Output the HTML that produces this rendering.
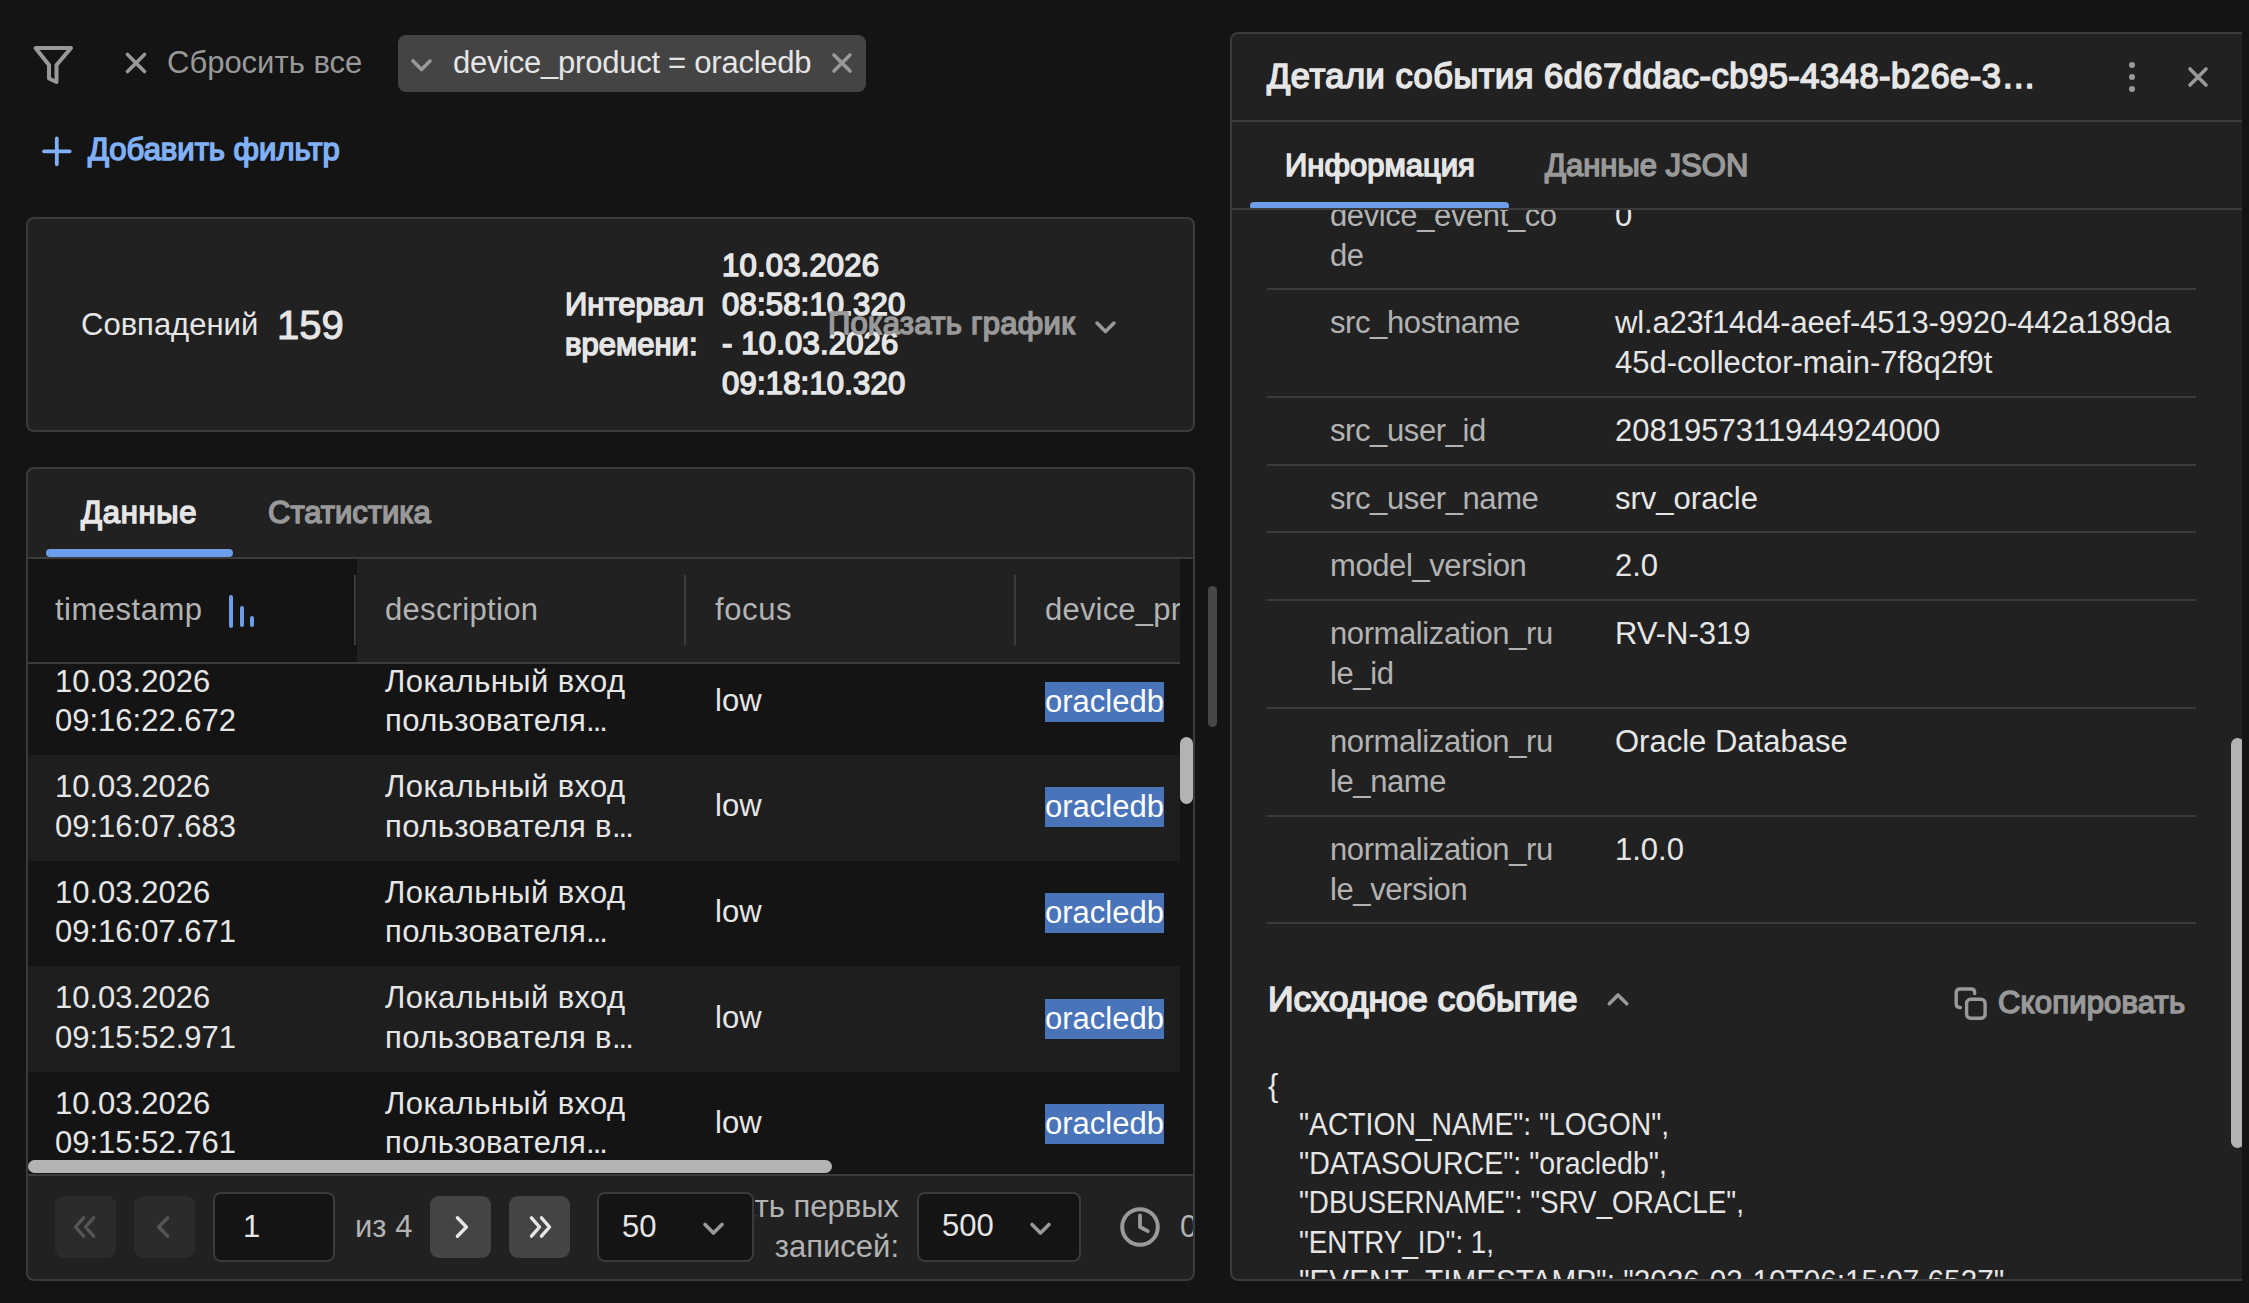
<!DOCTYPE html>
<html><head><meta charset="utf-8">
<style>
*{box-sizing:border-box;margin:0;padding:0}
html,body{width:2249px;height:1303px;overflow:hidden;background:#141414}
body{position:relative;font-family:"Liberation Sans",sans-serif;font-size:31px;color:#e6e6e6}
.a{position:absolute}
.t{position:absolute;white-space:nowrap;line-height:40px}
.b{font-weight:400;font-size:31px;-webkit-text-stroke:1.5px currentColor}
.g{color:#999}
.s{color:#b3b3b3}
.card{position:absolute;background:#212121;border:2px solid #3b3b3b;border-radius:8px}
svg{position:absolute;overflow:visible}
</style></head><body>

<!-- top filter bar -->
<svg style="left:0;top:0" width="1" height="1">
  <path d="M35.5 48 L71 48 L56.5 65 L56.5 82 L49 78.5 L49 65 Z" fill="none" stroke="#999" stroke-width="4" stroke-linejoin="round"/>
  <path d="M127.5 54.5 L144.5 71.5 M144.5 54.5 L127.5 71.5" stroke="#999" stroke-width="3.6" stroke-linecap="round"/>
</svg>
<div class="t g" style="left:167px;top:43.3px">Сбросить все</div>
<div class="a" style="left:398px;top:35px;width:468px;height:57px;background:#444;border-radius:8px"></div>
<svg style="left:0;top:0" width="1" height="1">
  <path d="M413 61 L421.5 69.5 L430 61" fill="none" stroke="#999" stroke-width="3.6" stroke-linecap="round" stroke-linejoin="round"/>
  <path d="M834 55 L850 71 M850 55 L834 71" stroke="#999" stroke-width="3.6" stroke-linecap="round"/>
</svg>
<div class="t" style="left:453px;top:43.3px;letter-spacing:-0.25px">device_product = oracledb</div>

<svg style="left:0;top:0" width="1" height="1">
  <path d="M44 151.3 L69.7 151.3 M56.8 138.5 L56.8 164.3" stroke="#80b0f7" stroke-width="3.8" stroke-linecap="round"/>
</svg>
<div class="t b" style="left:88px;top:130.3px;color:#80b0f7">Добавить фильтр</div>

<!-- card 1 -->
<div class="card" style="left:26px;top:217px;width:1169px;height:215px"></div>
<div class="t" style="left:81px;top:305.3px">Совпадений</div>
<div class="t b" style="left:277px;top:304.5px;font-size:40px;-webkit-text-stroke:1.0px currentColor">159</div>
<div class="t b" style="left:565px;top:285.2px;line-height:39.4px">Интервал<br>времени:</div>
<div class="t b" style="left:722px;top:245.6px;line-height:39.4px;letter-spacing:0.2px">10.03.2026<br>08:58:10.320<br>- 10.03.2026<br>09:18:10.320</div>
<div class="t b g" style="left:828px;top:303.7px;letter-spacing:0.3px">Показать график</div>
<svg style="left:0;top:0" width="1" height="1">
  <path d="M1097 323.1 L1105.5 331.6 L1114 323.1" fill="none" stroke="#999" stroke-width="3.6" stroke-linecap="round" stroke-linejoin="round"/>
</svg>

<!-- card 2 -->
<div class="card" style="left:26px;top:467px;width:1169px;height:814px"></div>
<div class="t b" style="left:81px;top:493.1px;letter-spacing:0.7px">Данные</div>
<div class="t b g" style="left:268px;top:493.4px">Статистика</div>
<div class="a" style="left:46px;top:549px;width:187px;height:8px;background:#6c9de9;border-radius:4px"></div>
<div class="a" style="left:28px;top:557px;width:1165px;height:2px;background:#3b3b3b"></div>

<!-- table -->
<div class="a" style="left:28px;top:559px;width:1165px;height:615px;background:#141414;overflow:hidden">
  <!-- header -->
  <div class="a" style="left:329px;top:0;width:823px;height:103px;background:#212121"></div>
  <div class="a" style="left:0;top:103px;width:1152px;height:2px;background:#3b3b3b"></div>
  <div class="a" style="left:326px;top:16px;width:2px;height:70px;background:#3b3b3b"></div>
  <div class="a" style="left:656px;top:16px;width:2px;height:70px;background:#3b3b3b"></div>
  <div class="a" style="left:986px;top:16px;width:2px;height:70px;background:#3b3b3b"></div>
  <div class="t s" style="left:27px;top:31.3px;letter-spacing:0.5px">timestamp</div>
  <div class="a" style="left:201px;top:35.5px;width:4px;height:33px;background:#6c9de9;border-radius:2px"></div>
  <div class="a" style="left:212px;top:46.6px;width:4px;height:21.4px;background:#6c9de9;border-radius:2px"></div>
  <div class="a" style="left:222.2px;top:57.4px;width:4px;height:10.6px;background:#6c9de9;border-radius:2px"></div>
  <div class="t s" style="left:357px;top:31.3px;letter-spacing:0.3px">description</div>
  <div class="t s" style="left:687px;top:31.3px;letter-spacing:0.6px">focus</div>
  <div class="a" style="left:1017px;top:0;width:135px;height:103px;overflow:hidden"><div class="t s" style="left:0;top:31.3px;letter-spacing:0.2px">device_product</div></div>
  <!-- body -->
  <div class="a" style="left:0;top:105px;width:1152px;height:510px;overflow:hidden">
    <div class="a" style="left:0;top:-14.6px;width:1152px">
      <div class="a" style="left:0;top:0.0px;width:1152px;height:105.6px;background:#141414">
        <div class="t" style="left:27px;top:12.2px;line-height:39.4px">10.03.2026<br>09:16:22.672</div>
        <div class="t" style="left:357px;top:12.2px;line-height:39.4px;letter-spacing:0.4px">Локальный вход<br>пользователя<span style="letter-spacing:-2px">...</span></div>
        <div class="t" style="left:687px;top:31.3px">low</div>
        <div class="t" style="left:1017px;top:32.4px;background:#4a74b9;color:#fff;padding-right:0">oracledb</div>
      </div>
      <div class="a" style="left:0;top:105.6px;width:1152px;height:105.6px;background:#1e1e1e">
        <div class="t" style="left:27px;top:12.2px;line-height:39.4px">10.03.2026<br>09:16:07.683</div>
        <div class="t" style="left:357px;top:12.2px;line-height:39.4px;letter-spacing:0.4px">Локальный вход<br>пользователя в<span style="letter-spacing:-2px">...</span></div>
        <div class="t" style="left:687px;top:31.3px">low</div>
        <div class="t" style="left:1017px;top:32.4px;background:#4a74b9;color:#fff;padding-right:0">oracledb</div>
      </div>
      <div class="a" style="left:0;top:211.2px;width:1152px;height:105.6px;background:#141414">
        <div class="t" style="left:27px;top:12.2px;line-height:39.4px">10.03.2026<br>09:16:07.671</div>
        <div class="t" style="left:357px;top:12.2px;line-height:39.4px;letter-spacing:0.4px">Локальный вход<br>пользователя<span style="letter-spacing:-2px">...</span></div>
        <div class="t" style="left:687px;top:31.3px">low</div>
        <div class="t" style="left:1017px;top:32.4px;background:#4a74b9;color:#fff;padding-right:0">oracledb</div>
      </div>
      <div class="a" style="left:0;top:316.8px;width:1152px;height:105.6px;background:#1e1e1e">
        <div class="t" style="left:27px;top:12.2px;line-height:39.4px">10.03.2026<br>09:15:52.971</div>
        <div class="t" style="left:357px;top:12.2px;line-height:39.4px;letter-spacing:0.4px">Локальный вход<br>пользователя в<span style="letter-spacing:-2px">...</span></div>
        <div class="t" style="left:687px;top:31.3px">low</div>
        <div class="t" style="left:1017px;top:32.4px;background:#4a74b9;color:#fff;padding-right:0">oracledb</div>
      </div>
      <div class="a" style="left:0;top:422.4px;width:1152px;height:105.6px;background:#141414">
        <div class="t" style="left:27px;top:12.2px;line-height:39.4px">10.03.2026<br>09:15:52.761</div>
        <div class="t" style="left:357px;top:12.2px;line-height:39.4px;letter-spacing:0.4px">Локальный вход<br>пользователя<span style="letter-spacing:-2px">...</span></div>
        <div class="t" style="left:687px;top:31.3px">low</div>
        <div class="t" style="left:1017px;top:32.4px;background:#4a74b9;color:#fff;padding-right:0">oracledb</div>
      </div>
    </div>
  </div>
  <!-- scrollbars -->
  <div class="a" style="left:1152px;top:178px;width:13px;height:67px;background:#b3b3b3;border-radius:6.5px"></div>
  <div class="a" style="left:0;top:601px;width:804px;height:13px;background:#b3b3b3;border-radius:6.5px"></div>
</div>

<!-- footer -->
<div class="a" style="left:28px;top:1174px;width:1165px;height:2px;background:#3b3b3b"></div>
<div class="a" style="left:55px;top:1196px;width:61px;height:62px;background:#2b2b2b;border-radius:9px"></div>
<div class="a" style="left:134px;top:1196px;width:61px;height:62px;background:#2b2b2b;border-radius:9px"></div>
<div class="a" style="left:213px;top:1192px;width:122px;height:70px;background:#141414;border:2px solid #3b3b3b;border-radius:8px"></div>
<div class="a" style="left:430px;top:1196px;width:61px;height:62px;background:#444;border-radius:9px"></div>
<div class="a" style="left:509px;top:1196px;width:61px;height:62px;background:#444;border-radius:9px"></div>
<svg style="left:0;top:0" width="1" height="1">
  <path d="M83.6 1217.8 L75.5 1227 L83.6 1236.2 M93.6 1217.8 L85.5 1227 L93.6 1236.2" fill="none" stroke="#555" stroke-width="3.4" stroke-linecap="round" stroke-linejoin="round"/>
  <path d="M167.7 1217.8 L158.7 1227 L167.7 1236.2" fill="none" stroke="#555" stroke-width="3.4" stroke-linecap="round" stroke-linejoin="round"/>
  <path d="M457.4 1217.8 L466.4 1227 L457.4 1236.2" fill="none" stroke="#e6e6e6" stroke-width="3.4" stroke-linecap="round" stroke-linejoin="round"/>
  <path d="M531.5 1217.8 L539.5 1227 L531.5 1236.2 M541.5 1217.8 L549.5 1227 L541.5 1236.2" fill="none" stroke="#e6e6e6" stroke-width="3.4" stroke-linecap="round" stroke-linejoin="round"/>
</svg>
<div class="t" style="left:243px;top:1207px">1</div>
<div class="t s" style="left:355px;top:1207px">из 4</div>
<div class="a" style="left:755px;top:1176px;width:145px;height:103px;overflow:hidden">
  <div class="t s" style="right:1px;top:11.2px;text-align:right">Показать первых<br>записей:</div>
</div>
<div class="a" style="left:597px;top:1192px;width:157px;height:70px;background:#141414;border:2px solid #3b3b3b;border-radius:8px"></div>
<div class="a" style="left:917px;top:1192px;width:164px;height:70px;background:#141414;border:2px solid #3b3b3b;border-radius:8px"></div>
<div class="t" style="left:622px;top:1206.7px">50</div>
<div class="t" style="left:942px;top:1205.5px">500</div>
<svg style="left:0;top:0" width="1" height="1">
  <path d="M705 1224.5 L713.5 1233 L722 1224.5" fill="none" stroke="#999" stroke-width="3.6" stroke-linecap="round" stroke-linejoin="round"/>
  <path d="M1032 1224.5 L1040.5 1233 L1049 1224.5" fill="none" stroke="#999" stroke-width="3.6" stroke-linecap="round" stroke-linejoin="round"/>
  <circle cx="1140" cy="1227" r="17.8" fill="none" stroke="#999" stroke-width="4"/>
  <path d="M1140 1215.5 L1140 1227 L1147.8 1231.2" fill="none" stroke="#999" stroke-width="3.8" stroke-linecap="round" stroke-linejoin="round"/>
</svg>
<div class="a" style="left:1170px;top:1176px;width:23px;height:103px;overflow:hidden">
  <div class="t s" style="left:10px;top:30.5px">0</div>
</div>

<!-- page scrollbar -->
<div class="a" style="left:1208px;top:586px;width:9px;height:141px;background:#474747;border-radius:4.5px"></div>

<!-- right panel -->
<div class="a" style="left:1230px;top:32px;width:1012px;height:1249px;overflow:hidden">
  <div class="a" style="left:0;top:0;width:1100px;height:1249px;background:#212121;border:2px solid #3b3b3b;border-radius:8px"></div>
  <div class="t b" style="left:37px;top:24.3px;font-size:34.4px;letter-spacing:0.55px;-webkit-text-stroke:1.6px currentColor">Детали события 6d67ddac-cb95-4348-b26e-3…</div>
  <div class="a" style="left:898.8px;top:29.8px;width:6.4px;height:6.4px;border-radius:50%;background:#999"></div>
  <div class="a" style="left:898.8px;top:41.8px;width:6.4px;height:6.4px;border-radius:50%;background:#999"></div>
  <div class="a" style="left:898.8px;top:53.8px;width:6.4px;height:6.4px;border-radius:50%;background:#999"></div>
  <svg style="left:0;top:0" width="1" height="1">
    <path d="M960 37 L976 53 M976 37 L960 53" stroke="#999" stroke-width="3.6" stroke-linecap="round"/>
  </svg>
  <div class="a" style="left:2px;top:88px;width:1010px;height:2px;background:#3b3b3b"></div>
  <div class="t b" style="left:55px;top:114.2px">Информация</div>
  <div class="t b g" style="left:315px;top:114.2px">Данные JSON</div>
  <!-- content -->
  <div class="a" style="left:2px;top:178px;width:1010px;height:1069px;overflow:hidden">
    <div class="t s" style="left:98px;top:-13.7px;line-height:39.4px;letter-spacing:-0.4px">device_event_co<br>de</div>
    <div class="t" style="left:383px;top:-13.7px;line-height:39.4px">0</div>
    <div class="a" style="left:35px;top:78px;width:929px;height:2px;background:#3b3b3b"></div>
    <div class="t s" style="left:98px;top:93.2px;line-height:39.4px;letter-spacing:-0.4px">src_hostname</div>
    <div class="t" style="left:383px;top:93.2px;line-height:39.4px"><span style="letter-spacing:-0.17px">wl.a23f14d4-aeef-4513-9920-442a189da</span><br>45d-collector-main-7f8q2f9t</div>
    <div class="a" style="left:35px;top:186px;width:929px;height:2px;background:#3b3b3b"></div>
    <div class="t s" style="left:98px;top:201.2px;line-height:39.4px;letter-spacing:-0.4px">src_user_id</div>
    <div class="t" style="left:383px;top:201.2px;line-height:39.4px">2081957311944924000</div>
    <div class="a" style="left:35px;top:254px;width:929px;height:2px;background:#3b3b3b"></div>
    <div class="t s" style="left:98px;top:269.2px;line-height:39.4px;letter-spacing:-0.4px">src_user_name</div>
    <div class="t" style="left:383px;top:269.2px;line-height:39.4px">srv_oracle</div>
    <div class="a" style="left:35px;top:321px;width:929px;height:2px;background:#3b3b3b"></div>
    <div class="t s" style="left:98px;top:336.2px;line-height:39.4px;letter-spacing:-0.4px">model_version</div>
    <div class="t" style="left:383px;top:336.2px;line-height:39.4px">2.0</div>
    <div class="a" style="left:35px;top:389px;width:929px;height:2px;background:#3b3b3b"></div>
    <div class="t s" style="left:98px;top:404.2px;line-height:39.4px;letter-spacing:-0.4px">normalization_ru<br>le_id</div>
    <div class="t" style="left:383px;top:404.2px;line-height:39.4px">RV-N-319</div>
    <div class="a" style="left:35px;top:497px;width:929px;height:2px;background:#3b3b3b"></div>
    <div class="t s" style="left:98px;top:512.2px;line-height:39.4px;letter-spacing:-0.4px">normalization_ru<br>le_name</div>
    <div class="t" style="left:383px;top:512.2px;line-height:39.4px">Oracle Database</div>
    <div class="a" style="left:35px;top:605px;width:929px;height:2px;background:#3b3b3b"></div>
    <div class="t s" style="left:98px;top:620.2px;line-height:39.4px;letter-spacing:-0.4px">normalization_ru<br>le_version</div>
    <div class="t" style="left:383px;top:620.2px;line-height:39.4px">1.0.0</div>
    <div class="a" style="left:35px;top:712px;width:929px;height:2px;background:#3b3b3b"></div>
    <div class="t b" style="left:36px;top:769.0px;font-size:35.6px;-webkit-text-stroke:1.6px currentColor">Исходное событие</div>
    <svg style="left:0;top:0" width="1" height="1">
      <path d="M377.3 793.7 L386 785 L394.8 793.7" fill="none" stroke="#999" stroke-width="3.6" stroke-linecap="round" stroke-linejoin="round"/>
      <path d="M728.5 797.5 L727.8 797.5 Q724.2 797.5 724.2 794 L724.2 783 Q724.2 779 728 779 L739 779 Q742.7 779 742.7 782.5 L742.7 783.5" fill="none" stroke="#999" stroke-width="3.4" stroke-linecap="round"/>
      <rect x="734.6" y="789.3" width="18.5" height="19" rx="4" fill="none" stroke="#999" stroke-width="3.4"/>
    </svg>
    <div class="t b g" style="left:766px;top:772.8px;letter-spacing:0.2px">Скопировать</div>
    <div class="t" style="left:36px;top:855.7px;line-height:39.2px">{</div>
        <div class="t" style="left:66.8px;top:894.9px;transform:scaleX(0.912);transform-origin:0 0">"ACTION_NAME": "LOGON",</div>
    <div class="t" style="left:66.8px;top:934.1px;transform:scaleX(0.921);transform-origin:0 0">"DATASOURCE": "oracledb",</div>
    <div class="t" style="left:66.8px;top:973.3px;transform:scaleX(0.896);transform-origin:0 0">"DBUSERNAME": "SRV_ORACLE",</div>
    <div class="t" style="left:66.8px;top:1012.5px;transform:scaleX(0.895);transform-origin:0 0">"ENTRY_ID": 1,</div>
    <div class="t" style="left:66.8px;top:1051.7px;transform:scaleX(0.958);transform-origin:0 0">"EVENT_TIMESTAMP": "2026-03-10T06:15:07.6537",</div>
  </div>
  <div class="a" style="left:20px;top:170px;width:259px;height:8px;background:#6c9de9;border-radius:4px"></div>
  <div class="a" style="left:2px;top:176px;width:1010px;height:2px;background:#3b3b3b"></div>
  <div class="a" style="left:1001px;top:706px;width:13px;height:410px;background:#b3b3b3;border-radius:6.5px"></div>
</div>

</body></html>
